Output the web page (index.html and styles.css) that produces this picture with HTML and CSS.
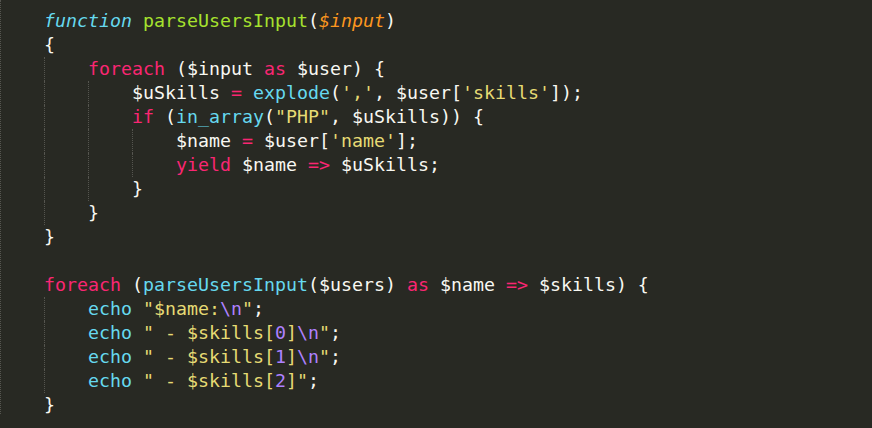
FILE: index.html
```html
<!DOCTYPE html>
<html lang="en">
<head>
<meta charset="utf-8">
<title>parseUsersInput</title>
<link rel="stylesheet" href="styles.css">
</head>
<body>
<div class="editor">
  <div class="line"><code class="src"><span class="st">function</span> <span class="fn">parseUsersInput</span>(<span class="pa">$input</span>)</code></div>
  <div class="line"><code class="src">{</code></div>
  <div class="line"><span class="ind"></span><code class="src"><span class="kw">foreach</span> ($input <span class="kw">as</span> $user) {</code></div>
  <div class="line"><span class="ind"></span><span class="ind"></span><code class="src">$uSkills <span class="kw">=</span> <span class="sp">explode</span>(<span class="str">','</span>, $user[<span class="str">'skills'</span>]);</code></div>
  <div class="line"><span class="ind"></span><span class="ind"></span><code class="src"><span class="kw">if</span> (<span class="sp">in_array</span>(<span class="str">"PHP"</span>, $uSkills)) {</code></div>
  <div class="line"><span class="ind"></span><span class="ind"></span><span class="ind"></span><code class="src">$name <span class="kw">=</span> $user[<span class="str">'name'</span>];</code></div>
  <div class="line"><span class="ind"></span><span class="ind"></span><span class="ind"></span><code class="src"><span class="kw">yield</span> $name <span class="kw">=&gt;</span> $uSkills;</code></div>
  <div class="line"><span class="ind"></span><span class="ind"></span><code class="src">}</code></div>
  <div class="line"><span class="ind"></span><code class="src">}</code></div>
  <div class="line"><code class="src">}</code></div>
  <div class="line"><code class="src"> </code></div>
  <div class="line"><code class="src"><span class="kw">foreach</span> (<span class="sp">parseUsersInput</span>($users) <span class="kw">as</span> $name <span class="kw">=&gt;</span> $skills) {</code></div>
  <div class="line"><span class="ind"></span><code class="src"><span class="sp">echo</span> <span class="str">"$name:<span class="num">\n</span>"</span>;</code></div>
  <div class="line"><span class="ind"></span><code class="src"><span class="sp">echo</span> <span class="str">" - $skills[<span class="num">0</span>]<span class="num">\n</span>"</span>;</code></div>
  <div class="line"><span class="ind"></span><code class="src"><span class="sp">echo</span> <span class="str">" - $skills[<span class="num">1</span>]<span class="num">\n</span>"</span>;</code></div>
  <div class="line"><span class="ind"></span><code class="src"><span class="sp">echo</span> <span class="str">" - $skills[<span class="num">2</span>]"</span>;</code></div>
  <div class="line"><code class="src">}</code></div>
</div>
</body>
</html>
```
FILE: styles.css
```css
html, body {
  margin: 0;
  padding: 0;
  background: #282923;
  height: 100%;
}

.editor {
  box-sizing: border-box;
  padding: 9px 0 0 43px;
  border-left: 1px dotted #55554f;
  width: 872px;
  height: 414px;
  font-family: "DejaVu Sans Mono", "Liberation Mono", monospace;
  font-size: 18.27px;
  color: #f8f8f2;
}

.line {
  display: flex;
  height: 24px;
  line-height: 24px;
}

.ind {
  flex: none;
  width: 44px;
  box-sizing: border-box;
  border-left: 1px dotted #55554f;
}

.src {
  font: inherit;
  white-space: pre;
}

.kw { color: #f92672; }
.st { color: #66d9ef; font-style: italic; }
.fn { color: #a6e22e; }
.pa { color: #fd971f; font-style: italic; }
.sp { color: #66d9ef; }
.str { color: #e6db74; }
.num { color: #ae81ff; }
```
